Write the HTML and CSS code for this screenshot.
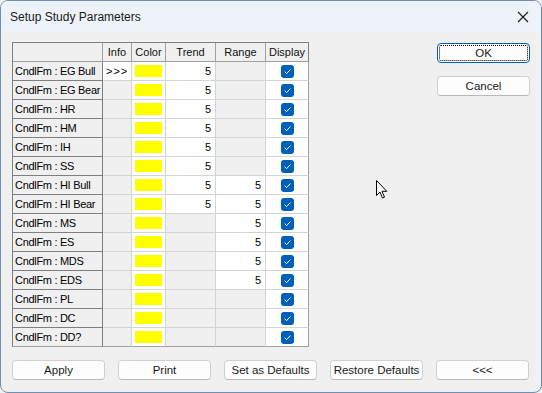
FILE: index.html
```html
<!DOCTYPE html>
<html lang="en">
<head>
  <meta charset="UTF-8">
  <title>Setup Study Parameters</title>
  <link rel="stylesheet" href="styles.css">
</head>
<body>
  <div class="window">
    <div class="title-bar">
      <span class="title">Setup Study Parameters</span>
      <svg class="close-icon" width="12" height="12" viewBox="0 0 12 12">
        <path d="M1 1 L11 11 M11 1 L1 11" stroke="#1a1a1a" stroke-width="1.1" fill="none"/>
      </svg>
    </div>

    <div class="content">
      <div class="main-row">
        <div class="grid" id="studyGrid">
          <div class="hd"></div>
          <div class="hd">Info</div>
          <div class="hd">Color</div>
          <div class="hd">Trend</div>
          <div class="hd">Range</div>
          <div class="hd">Display</div>
        </div>

        <div class="side-buttons">
          <button class="btn btn-focus"><span>OK</span></button>
          <button class="btn">Cancel</button>
        </div>
      </div>

      <div class="bottom-buttons">
        <button class="btn">Apply</button>
        <button class="btn">Print</button>
        <button class="btn">Set as Defaults</button>
        <button class="btn">Restore Defaults</button>
        <button class="btn">&lt;&lt;&lt;</button>
      </div>
    </div>

    <svg class="cursor" width="13" height="20" viewBox="0 0 13 20">
      <path d="M0.5 0.5 L0.5 15.5 L4 12 L6.5 18 L8.5 17.2 L6 11.3 L10.8 11.3 Z" fill="#fff" stroke="#000" stroke-width="1"/>
    </svg>
  </div>

  <script>
    const rows = [
      { name: "EG Bull", info: ">>>", trend: 5, range: null },
      { name: "EG Bear", trend: 5, range: null },
      { name: "HR", trend: 5, range: null },
      { name: "HM", trend: 5, range: null },
      { name: "IH", trend: 5, range: null },
      { name: "SS", trend: 5, range: null },
      { name: "HI Bull", trend: 5, range: 5 },
      { name: "HI Bear", trend: 5, range: 5 },
      { name: "MS", trend: null, range: 5 },
      { name: "ES", trend: null, range: 5 },
      { name: "MDS", trend: null, range: 5 },
      { name: "EDS", trend: null, range: 5 },
      { name: "PL", trend: null, range: null },
      { name: "DC", trend: null, range: null },
      { name: "DD?", trend: null, range: null }
    ];

    const check = '<svg class="check" width="13" height="13" viewBox="0 0 13 13">' +
      '<rect x="0" y="0" width="13" height="13" rx="3" fill="#005fb8"/>' +
      '<path d="M3.6 6.7 L5.6 8.6 L9.4 4.6" stroke="#fff" stroke-width="1" fill="none"/></svg>';

    const grid = document.getElementById("studyGrid");
    let html = "";
    rows.forEach(r => {
      html += `<div class="rh">CndlFm : ${r.name}</div>`;
      html += r.info ? `<div class="cell info">&gt;&gt;&gt;</div>` : `<div class="cell off"></div>`;
      html += `<div class="cell swatch-cell"><span class="swatch"></span></div>`;
      html += r.trend !== null ? `<div class="cell num">${r.trend}</div>` : `<div class="cell off"></div>`;
      html += r.range !== null ? `<div class="cell num">${r.range}</div>` : `<div class="cell off"></div>`;
      html += `<div class="cell center">${check}</div>`;
    });
    grid.insertAdjacentHTML("beforeend", html);
  </script>
</body>
</html>
```

FILE: styles.css
```css
html, body {
  margin: 0;
  padding: 0;
  background-color: #f0f0f0;
}

body {
  font-family: "Liberation Sans", Arial, sans-serif;
  font-size: 11px;
  color: #000;
}

.window {
  position: relative;
  width: 542px;
  height: 393px;
  box-sizing: border-box;
  border: 1px solid #6f8fb3;
  border-radius: 8px;
  background-color: #f0f0f0;
  overflow: hidden;
}

.title-bar {
  height: 31px;
  display: flex;
  align-items: center;
  justify-content: space-between;
  padding: 0 12px 0 9px;
  background-color: #eef3f9;
}

.title {
  font-size: 12px;
  color: #1a1a1a;
}

.close-icon {
  display: block;
}

.content {
  padding: 10px 11px 0 11px;
}

.main-row {
  display: flex;
  justify-content: space-between;
  align-items: flex-start;
}

.grid {
  display: grid;
  grid-template-columns: 90px 29px 34px 50px 50px 43px;
  grid-auto-rows: 19px;
  border-left: 1px solid #7f7f7f;
  border-top: 1px solid #7f7f7f;
  font-size: 11px;
}

.grid > div {
  box-sizing: border-box;
  border-right: 1px solid #d4d4d4;
  border-bottom: 1px solid #d4d4d4;
  display: flex;
  align-items: center;
  line-height: 1;
}

.grid .hd {
  justify-content: center;
  background-color: #f0f0f0;
  border-right-color: #a0a0a0;
  border-bottom-color: #a0a0a0;
  color: #111;
}

.grid .hd:nth-child(6) {
  border-right-color: #7f7f7f;
}

.grid .rh {
  background-color: #f0f0f0;
  border-right-color: #7f7f7f;
  border-bottom-color: #7f7f7f;
  padding-left: 2px;
  letter-spacing: -0.3px;
  white-space: nowrap;
}

.cell {
  background-color: #fff;
}

.cell.off {
  background-color: #f0f0f0;
}

.cell.info {
  padding-left: 3px;
  letter-spacing: 1px;
}

.cell.num {
  justify-content: flex-end;
  padding-right: 4px;
}

.cell.center {
  justify-content: center;
}

.grid .cell:nth-child(6n) {
  border-right-color: #a0a0a0;
}

.grid > div:nth-last-child(-n+6) {
  border-bottom-color: #a0a0a0;
}

.swatch-cell {
  padding-left: 3px;
}

.swatch {
  display: block;
  width: 27px;
  height: 12px;
  background-color: #ffff00;
}

.check {
  display: block;
}

.side-buttons {
  display: flex;
  flex-direction: column;
  gap: 13px;
  padding-top: 1px;
}

.btn {
  width: 93px;
  height: 20px;
  box-sizing: border-box;
  padding: 0;
  background-color: #fdfdfd;
  border: 1px solid #d0d0d0;
  border-bottom-color: #b8b8b8;
  border-radius: 4px;
  font-family: "Liberation Sans", Arial, sans-serif;
  font-size: 11.5px;
  color: #1a1a1a;
  line-height: 16px;
  white-space: nowrap;
  cursor: pointer;
}

.btn-focus {
  border: 1px solid #005fb8;
  padding: 1px;
}

.btn-focus span {
  display: block;
  height: 100%;
  box-sizing: border-box;
  border: 1px dotted #000;
  border-radius: 2px;
  line-height: 14px;
}

.bottom-buttons {
  display: flex;
  gap: 13px;
  margin-top: 13px;
}

.cursor {
  position: absolute;
  left: 375px;
  top: 179px;
}
```
